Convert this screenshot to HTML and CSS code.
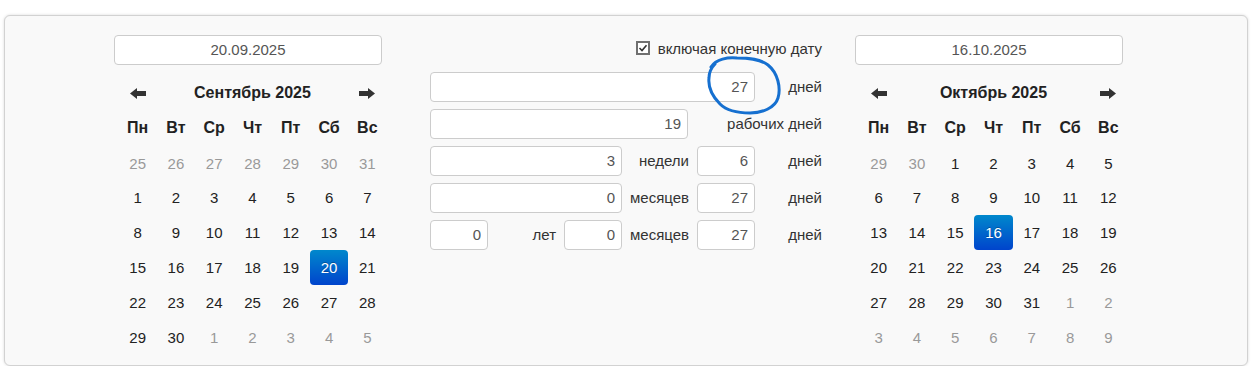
FILE: index.html
```html
<!DOCTYPE html>
<html lang="ru">
<head>
    <meta charset="UTF-8">
    <title>Калькулятор дней между датами</title>
    <link rel="stylesheet" href="styles.css">
</head>
<body>

<div class="panel">

    <!-- Start date -->
    <div class="side">
        <input class="date-input" type="text" value="20.09.2025">
        <table class="cal">
            <thead>
                <tr>
                    <th class="nav"><svg width="16" height="11" viewBox="0 0 16 11"><path d="M0 5.5 L7 0 V3 H16 V8 H7 V11 Z"/></svg></th>
                    <th class="title" colspan="5">Сентябрь 2025</th>
                    <th class="nav"><svg width="16" height="11" viewBox="0 0 16 11"><path d="M16 5.5 L9 0 V3 H0 V8 H9 V11 Z"/></svg></th>
                </tr>
                <tr class="dow">
                    <th>Пн</th><th>Вт</th><th>Ср</th><th>Чт</th><th>Пт</th><th>Сб</th><th>Вс</th>
                </tr>
            </thead>
            <tbody>
                <tr><td class="old">25</td><td class="old">26</td><td class="old">27</td><td class="old">28</td><td class="old">29</td><td class="old">30</td><td class="old">31</td></tr>
                <tr><td>1</td><td>2</td><td>3</td><td>4</td><td>5</td><td>6</td><td>7</td></tr>
                <tr><td>8</td><td>9</td><td>10</td><td>11</td><td>12</td><td>13</td><td>14</td></tr>
                <tr><td>15</td><td>16</td><td>17</td><td>18</td><td>19</td><td class="active">20</td><td>21</td></tr>
                <tr><td>22</td><td>23</td><td>24</td><td>25</td><td>26</td><td>27</td><td>28</td></tr>
                <tr><td>29</td><td>30</td><td class="old">1</td><td class="old">2</td><td class="old">3</td><td class="old">4</td><td class="old">5</td></tr>
            </tbody>
        </table>
    </div>

    <!-- Result -->
    <div class="middle">
        <label class="incl">
            <span class="check"><svg width="14" height="14" viewBox="0 0 14 14"><rect x="1" y="1" width="12" height="12" fill="#fff" stroke="#707070" stroke-width="2"/><polyline points="3.5,7 6,9.5 10.5,4.2" fill="none" stroke="#333" stroke-width="1.6"/></svg></span>
            включая конечную дату
        </label>
        <div class="result">
            <input class="num w5" type="text" value="27"><span class="lbl">дней</span>

            <input class="num w4" type="text" value="19"><span class="lbl w2">рабочих дней</span>

            <input class="num w3" type="text" value="3"><span class="lbl pad">недели</span>
            <input class="num" type="text" value="6"><span class="lbl">дней</span>

            <input class="num w3" type="text" value="0"><span class="lbl pad">месяцев</span>
            <input class="num" type="text" value="27"><span class="lbl">дней</span>

            <input class="num" type="text" value="0"><span class="lbl pad">лет</span>
            <input class="num" type="text" value="0"><span class="lbl pad">месяцев</span>
            <input class="num" type="text" value="27"><span class="lbl">дней</span>
        </div>
    </div>

    <!-- End date -->
    <div class="side side-right">
        <input class="date-input" type="text" value="16.10.2025">
        <table class="cal">
            <thead>
                <tr>
                    <th class="nav"><svg width="16" height="11" viewBox="0 0 16 11"><path d="M0 5.5 L7 0 V3 H16 V8 H7 V11 Z"/></svg></th>
                    <th class="title" colspan="5">Октябрь 2025</th>
                    <th class="nav"><svg width="16" height="11" viewBox="0 0 16 11"><path d="M16 5.5 L9 0 V3 H0 V8 H9 V11 Z"/></svg></th>
                </tr>
                <tr class="dow">
                    <th>Пн</th><th>Вт</th><th>Ср</th><th>Чт</th><th>Пт</th><th>Сб</th><th>Вс</th>
                </tr>
            </thead>
            <tbody>
                <tr><td class="old">29</td><td class="old">30</td><td>1</td><td>2</td><td>3</td><td>4</td><td>5</td></tr>
                <tr><td>6</td><td>7</td><td>8</td><td>9</td><td>10</td><td>11</td><td>12</td></tr>
                <tr><td>13</td><td>14</td><td>15</td><td class="active">16</td><td>17</td><td>18</td><td>19</td></tr>
                <tr><td>20</td><td>21</td><td>22</td><td>23</td><td>24</td><td>25</td><td>26</td></tr>
                <tr><td>27</td><td>28</td><td>29</td><td>30</td><td>31</td><td class="old">1</td><td class="old">2</td></tr>
                <tr><td class="old">3</td><td class="old">4</td><td class="old">5</td><td class="old">6</td><td class="old">7</td><td class="old">8</td><td class="old">9</td></tr>
            </tbody>
        </table>
    </div>

    <!-- hand-drawn marker round the day count -->
    <svg class="marker" width="90" height="70" viewBox="0 0 90 70">
        <path d="M11 17 C16 9, 28 7, 37 8 C50 8, 60 9, 68 15 C78 23, 81 38, 78 48 C75 58, 62 63, 50 63 C38 63, 27 61, 20 54 C12 46, 8 37, 9 28 C9 22, 11 18, 15 14"/>
    </svg>
</div>

</body>
</html>
```

FILE: styles.css
```css
body {
    margin: 0;
    background: #fff;
    font-family: "Liberation Sans", Arial, sans-serif;
    font-size: 15px;
    color: #333;
}
.panel {
    position: relative;
    box-sizing: border-box;
    display: flex;
    align-items: flex-start;
    height: 351px;
    margin: 15px 3px 0 4px;
    padding: 19px 0 0 109px;
    background: #f9f9f9;
    border: 1px solid #d2d2d2;
    border-radius: 6px;
    box-shadow: 0 0 3px rgba(0, 0, 0, 0.15);
}
.side {
    width: 268px;
}
.side-right {
    margin-left: 33px;
}
.date-input {
    display: block;
    box-sizing: border-box;
    width: 268px;
    height: 30px;
    padding: 0 0 1px;
    border: 1px solid #ccc;
    border-radius: 4px;
    background: #fff;
    font: inherit;
    color: #555;
    text-align: center;
}

/* calendar */
.cal {
    width: 268px;
    margin: 11px 0 0 4.5px;
    border-collapse: collapse;
    table-layout: fixed;
}
.cal th, .cal td {
    height: 34.85px;
    padding: 0;
    text-align: center;
    color: #222;
}
.cal th {
    font-size: 16px;
    font-weight: bold;
}
.cal .nav svg {
    display: block;
    margin: 0 auto;
    fill: #333;
}
.cal td.old {
    color: #999;
}
.cal td.active {
    color: #fff;
    background: linear-gradient(to bottom, #0088cc, #0044cc);
    border-radius: 4px;
    text-shadow: 0 -1px 0 rgba(0, 0, 0, 0.25);
}

/* middle column */
.middle {
    width: 392px;
    margin-left: 48px;
}
.incl {
    display: flex;
    align-items: center;
    justify-content: flex-end;
    gap: 8px;
    height: 26px;
    margin-bottom: 11px;
}
.check svg {
    display: block;
}
.result {
    display: grid;
    grid-template-columns: 58px 76px 58px 75px 58px 67px;
    grid-auto-rows: 30px;
    row-gap: 7px;
}
.num {
    box-sizing: border-box;
    min-width: 0;
    height: 30px;
    padding: 0 6px 1px;
    border: 1px solid #ccc;
    border-radius: 4px;
    background: #fff;
    font: inherit;
    color: #555;
    text-align: right;
}
.w5 { grid-column: span 5; }
.w4 { grid-column: span 4; margin-right: 9px; }
.w3 { grid-column: span 3; }
.w2 { grid-column: span 2; }
.lbl {
    align-self: center;
    margin-bottom: 2px;
    text-align: right;
    white-space: nowrap;
}
.lbl.pad {
    padding-right: 8px;
}

.marker {
    position: absolute;
    left: 695px;
    top: 34px;
    fill: none;
    stroke: #1670d0;
    stroke-width: 3;
    stroke-linecap: round;
}
```
